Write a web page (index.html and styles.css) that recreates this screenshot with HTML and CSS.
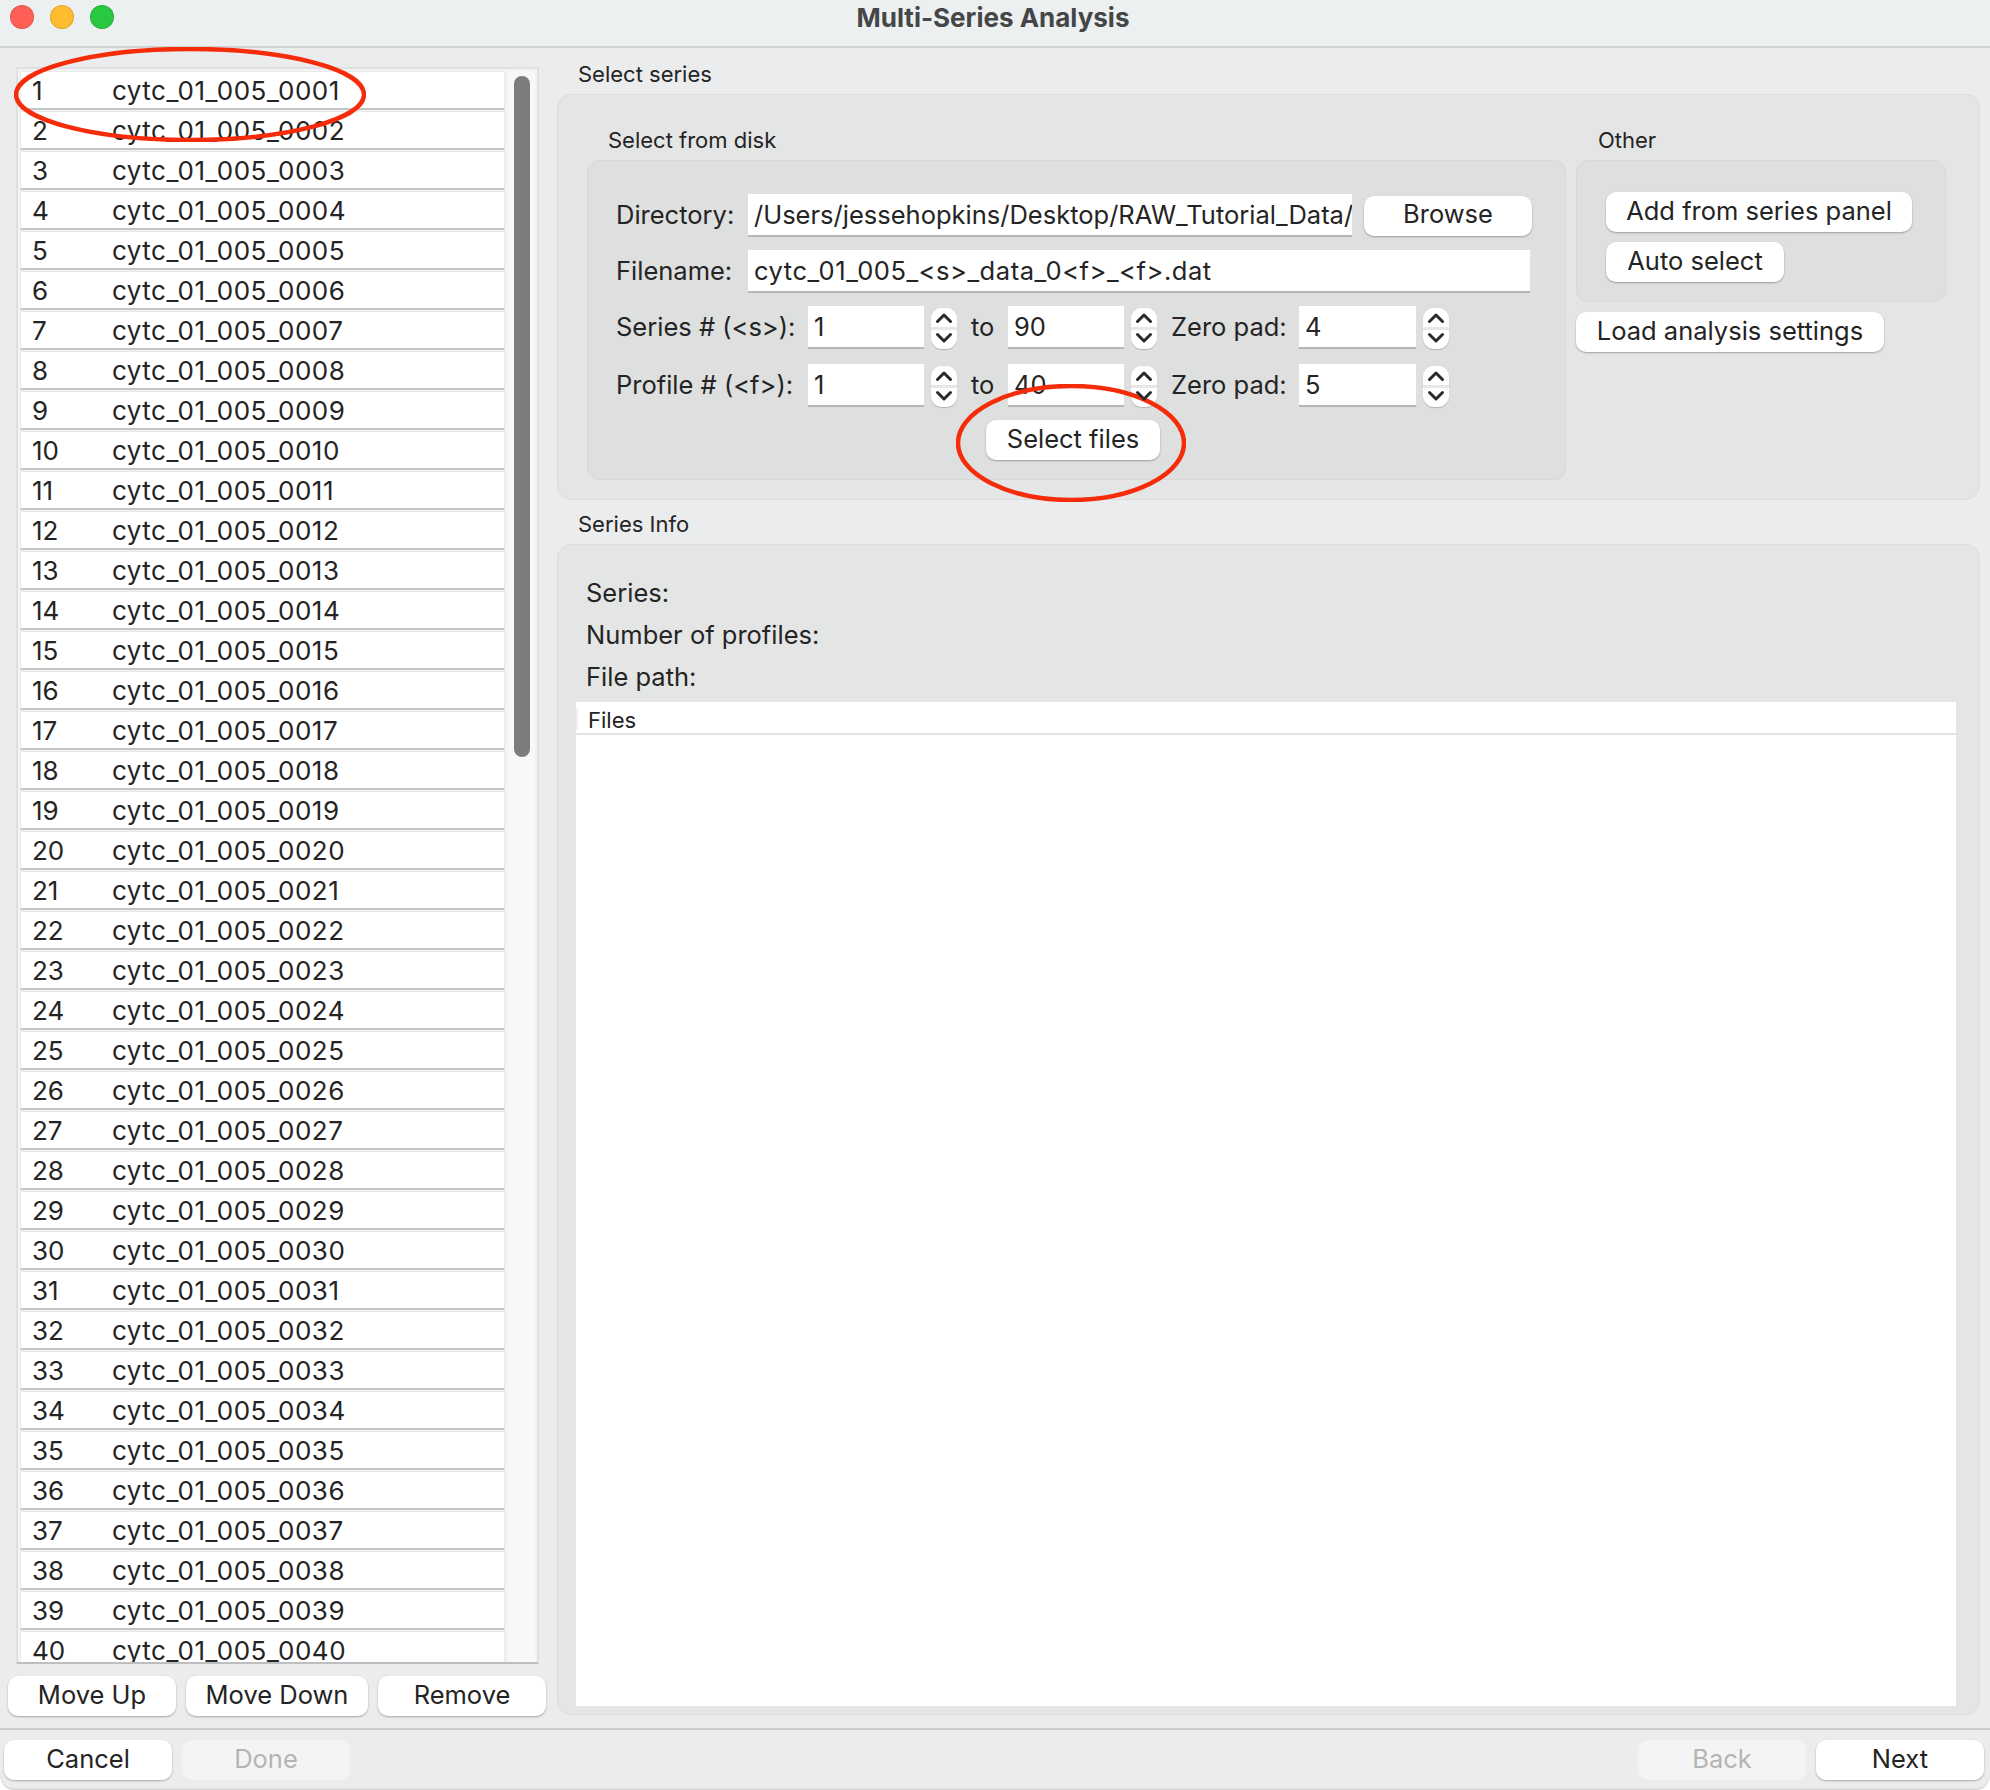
FILE: index.html
```html
<!DOCTYPE html>
<html lang="en">
<head>
<meta charset="utf-8">
<title>Multi-Series Analysis</title>
<link rel="stylesheet" href="styles.css">
</head>
<body>
<div class="window">
  <header class="titlebar">
    <div class="lights"><span class="light red"></span><span class="light yellow"></span><span class="light green"></span></div>
    <div class="title">Multi-Series Analysis</div>
  </header>
  <main class="main">
    <section class="left">
      <div class="list">
        <div class="rows">
          <div class="row"><span class="num">1</span><span>cytc_01_005_0001</span></div>
          <div class="row"><span class="num">2</span><span>cytc_01_005_0002</span></div>
          <div class="row"><span class="num">3</span><span>cytc_01_005_0003</span></div>
          <div class="row"><span class="num">4</span><span>cytc_01_005_0004</span></div>
          <div class="row"><span class="num">5</span><span>cytc_01_005_0005</span></div>
          <div class="row"><span class="num">6</span><span>cytc_01_005_0006</span></div>
          <div class="row"><span class="num">7</span><span>cytc_01_005_0007</span></div>
          <div class="row"><span class="num">8</span><span>cytc_01_005_0008</span></div>
          <div class="row"><span class="num">9</span><span>cytc_01_005_0009</span></div>
          <div class="row"><span class="num">10</span><span>cytc_01_005_0010</span></div>
          <div class="row"><span class="num">11</span><span>cytc_01_005_0011</span></div>
          <div class="row"><span class="num">12</span><span>cytc_01_005_0012</span></div>
          <div class="row"><span class="num">13</span><span>cytc_01_005_0013</span></div>
          <div class="row"><span class="num">14</span><span>cytc_01_005_0014</span></div>
          <div class="row"><span class="num">15</span><span>cytc_01_005_0015</span></div>
          <div class="row"><span class="num">16</span><span>cytc_01_005_0016</span></div>
          <div class="row"><span class="num">17</span><span>cytc_01_005_0017</span></div>
          <div class="row"><span class="num">18</span><span>cytc_01_005_0018</span></div>
          <div class="row"><span class="num">19</span><span>cytc_01_005_0019</span></div>
          <div class="row"><span class="num">20</span><span>cytc_01_005_0020</span></div>
          <div class="row"><span class="num">21</span><span>cytc_01_005_0021</span></div>
          <div class="row"><span class="num">22</span><span>cytc_01_005_0022</span></div>
          <div class="row"><span class="num">23</span><span>cytc_01_005_0023</span></div>
          <div class="row"><span class="num">24</span><span>cytc_01_005_0024</span></div>
          <div class="row"><span class="num">25</span><span>cytc_01_005_0025</span></div>
          <div class="row"><span class="num">26</span><span>cytc_01_005_0026</span></div>
          <div class="row"><span class="num">27</span><span>cytc_01_005_0027</span></div>
          <div class="row"><span class="num">28</span><span>cytc_01_005_0028</span></div>
          <div class="row"><span class="num">29</span><span>cytc_01_005_0029</span></div>
          <div class="row"><span class="num">30</span><span>cytc_01_005_0030</span></div>
          <div class="row"><span class="num">31</span><span>cytc_01_005_0031</span></div>
          <div class="row"><span class="num">32</span><span>cytc_01_005_0032</span></div>
          <div class="row"><span class="num">33</span><span>cytc_01_005_0033</span></div>
          <div class="row"><span class="num">34</span><span>cytc_01_005_0034</span></div>
          <div class="row"><span class="num">35</span><span>cytc_01_005_0035</span></div>
          <div class="row"><span class="num">36</span><span>cytc_01_005_0036</span></div>
          <div class="row"><span class="num">37</span><span>cytc_01_005_0037</span></div>
          <div class="row"><span class="num">38</span><span>cytc_01_005_0038</span></div>
          <div class="row"><span class="num">39</span><span>cytc_01_005_0039</span></div>
          <div class="row"><span class="num">40</span><span>cytc_01_005_0040</span></div>
        </div>
        <div class="scrolltrack"><div class="scrollthumb"></div></div>
      </div>
      <div class="list-actions">
        <button class="btn w168">Move Up</button>
        <button class="btn w182">Move Down</button>
        <button class="btn w168">Remove</button>
      </div>
    </section>
    <section class="right">
      <div class="caption">Select series</div>
      <div class="panel panel-series">
        <div class="sub-left">
          <div class="caption caption-sub">Select from disk</div>
          <div class="box box-disk">
            <div class="form-row gap-after-13">
              <label class="lbl w130">Directory:</label>
              <div class="field w604"><span class="clip">/Users/jessehopkins/Desktop/RAW_Tutorial_Data/</span></div>
              <button class="btn w168 browse">Browse</button>
            </div>
            <div class="form-row gap-after-13">
              <label class="lbl w130">Filename:</label>
              <div class="field w782 fname">cytc_01_005_&lt;s&gt;_data_0&lt;f&gt;_&lt;f&gt;.dat</div>
            </div>
            <div class="form-row gap-after-15">
              <label class="lbl w191">Series # (&lt;s&gt;):</label>
              <div class="field w116">1</div>
              <div class="spin"><svg class="chev" viewBox="0 0 26 20"><path d="M6.500 13.500 13 7 19.500 13.500"/></svg><svg class="chev" viewBox="0 0 26 20"><path d="M6.500 5.500 13 12 19.500 5.500"/></svg></div>
              <span class="lbl to">to</span>
              <div class="field w116">90</div>
              <div class="spin"><svg class="chev" viewBox="0 0 26 20"><path d="M6.500 13.500 13 7 19.500 13.500"/></svg><svg class="chev" viewBox="0 0 26 20"><path d="M6.500 5.500 13 12 19.500 5.500"/></svg></div>
              <span class="lbl zero">Zero pad:</span>
              <div class="field w117">4</div>
              <div class="spin"><svg class="chev" viewBox="0 0 26 20"><path d="M6.500 13.500 13 7 19.500 13.500"/></svg><svg class="chev" viewBox="0 0 26 20"><path d="M6.500 5.500 13 12 19.500 5.500"/></svg></div>
            </div>
            <div class="form-row gap-after-13">
              <label class="lbl w191">Profile # (&lt;f&gt;):</label>
              <div class="field w116">1</div>
              <div class="spin"><svg class="chev" viewBox="0 0 26 20"><path d="M6.500 13.500 13 7 19.500 13.500"/></svg><svg class="chev" viewBox="0 0 26 20"><path d="M6.500 5.500 13 12 19.500 5.500"/></svg></div>
              <span class="lbl to">to</span>
              <div class="field w116">40</div>
              <div class="spin"><svg class="chev" viewBox="0 0 26 20"><path d="M6.500 13.500 13 7 19.500 13.500"/></svg><svg class="chev" viewBox="0 0 26 20"><path d="M6.500 5.500 13 12 19.500 5.500"/></svg></div>
              <span class="lbl zero">Zero pad:</span>
              <div class="field w117">5</div>
              <div class="spin"><svg class="chev" viewBox="0 0 26 20"><path d="M6.500 13.500 13 7 19.500 13.500"/></svg><svg class="chev" viewBox="0 0 26 20"><path d="M6.500 5.500 13 12 19.500 5.500"/></svg></div>
            </div>
            <div class="select-row"><button class="btn w174">Select files</button></div>
          </div>
        </div>
        <div class="sub-right">
          <div class="caption caption-sub other">Other</div>
          <div class="box box-other">
            <button class="btn w306">Add from series panel</button>
            <button class="btn w178">Auto select</button>
          </div>
          <button class="btn w308 load">Load analysis settings</button>
        </div>
      </div>
      <div class="caption caption-info">Series Info</div>
      <div class="panel panel-info">
        <div class="info-line">Series:</div>
        <div class="info-line">Number of profiles:</div>
        <div class="info-line">File path:</div>
        <div class="files">
          <div class="files-head"><span class="files-title">Files</span></div>
        </div>
      </div>
    </section>
  </main>
  <footer class="footer">
    <div class="foot-group">
      <button class="btn w168">Cancel</button>
      <button class="btn w168" disabled>Done</button>
    </div>
    <div class="foot-group">
      <button class="btn w168" disabled>Back</button>
      <button class="btn w168">Next</button>
    </div>
  </footer>
  <svg class="mark mark-list" viewBox="0 0 352 95"><ellipse cx="176" cy="47.500" rx="174" ry="45.500"/></svg>
  <svg class="mark mark-select" viewBox="0 0 230 118"><ellipse cx="115" cy="59" rx="113" ry="57"/></svg>
</div>
</body>
</html>
```

FILE: styles.css
```css
* { box-sizing: border-box; }
html, body { margin: 0; padding: 0; background: #ffffff; }
body { font-family: Inter, "Liberation Sans", sans-serif; color: #242424; font-size: 25.5px; }
.window { position: relative; width: 1990px; height: 1790px; background: #ebecee; display: flex; flex-direction: column; overflow: hidden; border-radius: 0 0 14px 14px; }

.titlebar { height: 48px; background: #edf0f1; border-bottom: 2px solid #cfd1d2; display: grid; grid-template-columns: 1fr; align-items: center; position: relative; flex: none; }
.lights { position: absolute; left: 10px; top: 5px; display: flex; gap: 16px; }
.light { width: 24px; height: 24px; border-radius: 50%; border: 1px solid rgba(0,0,0,.12); }
.red { background: #ff5f57; }
.yellow { background: #febc2e; }
.green { background: #28c840; }
.title { text-align: center; font-weight: 700; font-size: 26px; color: #444648; padding-right: 4px; margin-top: -12px; }

.main { height: 1680px; display: flex; flex: none; }
.left { width: 538px; margin-left: 8px; padding-top: 19px; flex: none; display: flex; flex-direction: column; }
.list { width: 523px; height: 1597px; margin-left: 8px; background: #f3f3f3; border: 2px solid #dfe0e1; border-bottom-color: #bdbebf; display: flex; overflow: hidden; padding: 2px 2px 0 2px; }
.rows { width: 485px; flex: none; overflow: hidden; height: 100%; }
.row { height: 39px; margin-bottom: 1px; background: #fff; border: 1px solid #eaeaea; border-bottom: 2px solid #c4c5c6; display: flex; align-items: center; font-size: 26px; letter-spacing: .5px; padding: 1px 0 0 11px; }
.num { width: 80px; flex: none; letter-spacing: 0; }
.scrolltrack { width: 27px; flex: none; padding: 5px 0 0 6px; background: #f8f8f8; margin-left: 3px; }
.scrollthumb { width: 16px; height: 681px; background: #7c7c7c; border-radius: 8px; }

.list-actions { display: flex; gap: 10px; margin-top: 12px; }

.btn { height: 40px; border: 0; border-radius: 10px; background: #fff; color: #242424; font: inherit; font-size: 25.5px; box-shadow: 0 1px 2px rgba(0,0,0,.3); padding: 0 0 4px; flex: none; }
.btn:disabled { background: #f4f4f5; color: #b4b4b4; box-shadow: none; }
.w168 { width: 168px; }
.w182 { width: 182px; }
.w174 { width: 174px; }
.w306 { width: 306px; }
.w178 { width: 178px; }
.w308 { width: 308px; }

.right { width: 1423px; margin-left: 11px; padding-top: 12px; flex: none; display: flex; flex-direction: column; }
.caption { height: 28px; margin-bottom: 6px; padding-left: 21px; font-size: 22px; line-height: 28px; }
.caption-sub { padding-left: 21px; }
.caption-info { margin-top: 10px; padding-left: 21px; }
.other { padding-left: 22px; }

.panel { background: #e4e5e5; border: 1px solid #dcdddd; border-radius: 14px; }
.panel-series { height: 406px; padding: 31px 0 0 29px; display: flex; gap: 10px; }
.sub-left { width: 979px; flex: none; }
.sub-right { width: 370px; flex: none; }
.box { background: #dedfdf; border: 1px solid #d7d8d8; border-radius: 12px; }
.box-disk { height: 320px; padding: 33px 0 0 28px; }
.box-other { height: 142px; padding: 31px 0 0 29px; display: flex; flex-direction: column; align-items: flex-start; gap: 10px; }
.load { margin-top: 10px; }

.form-row { display: flex; align-items: center; height: 43px; }
.gap-after-13 { margin-bottom: 13px; }
.gap-after-15 { margin-bottom: 15px; }
.lbl { font-size: 25.5px; flex: none; white-space: nowrap; margin-top: -2px; }
.w130 { width: 132px; }
.w191 { width: 192px; }
.field { height: 43px; background: #fff; border-bottom: 2px solid #b5b6b6; font-size: 25.5px; line-height: 41px; padding-left: 6px; flex: none; white-space: nowrap; overflow: hidden; }
.fname { letter-spacing: .54px; }
.clip { display: block; width: 100%; overflow: hidden; }
.w604 { width: 604px; }
.w782 { width: 782px; }
.w116 { width: 116px; }
.w117 { width: 117px; }
.browse { margin-left: 12px; }
.spin { width: 26px; height: 41px; margin: 2px 0 0 7px; background: #fff; border-radius: 11px; box-shadow: 0 1px 1px rgba(0,0,0,.2); display: flex; flex-direction: column; justify-content: space-between; flex: none; position: relative; }
.spin::after { content: ""; position: absolute; left: 0; right: 0; top: 19px; height: 3px; background: #e6e7e7; }
.chev { width: 26px; height: 20px; display: block; fill: none; stroke: #2a2a2a; stroke-width: 3; stroke-linecap: round; stroke-linejoin: round; position: relative; z-index: 1; }
.to { width: 51px; padding-left: 14px; }
.zero { width: 142px; padding-left: 14px; }
.select-row { margin-left: 370px; }

.panel-info { height: 1171px; padding: 27px 0 0 28px; }
.info-line { height: 42px; line-height: 42px; font-size: 25.5px; }
.files { margin: 4px 0 0 -10px; width: 1380px; height: 1004px; background: #fff; }
.files-head { height: 33px; border-bottom: 2px solid #e2e3e3; padding-top: 6px; }
.files-title { display: block; height: 22px; line-height: 24px; border-left: 2px solid #efefef; padding-left: 10px; font-size: 22px; }

.footer { height: 62px; border-top: 2px solid #c9cacb; padding: 10px 6px 0 4px; display: flex; justify-content: space-between; flex: none; background: #ebecee; border-radius: 0 0 14px 14px; box-shadow: inset 0 -2px 2px -1px rgba(0,0,0,.14); }
.foot-group { display: flex; gap: 10px; }

.mark { position: absolute; fill: none; stroke: #f52c0a; stroke-width: 4.5; }
.mark-list { left: 14px; top: 47px; width: 352px; height: 95px; }
.mark-select { left: 956px; top: 384px; width: 230px; height: 118px; }
```
